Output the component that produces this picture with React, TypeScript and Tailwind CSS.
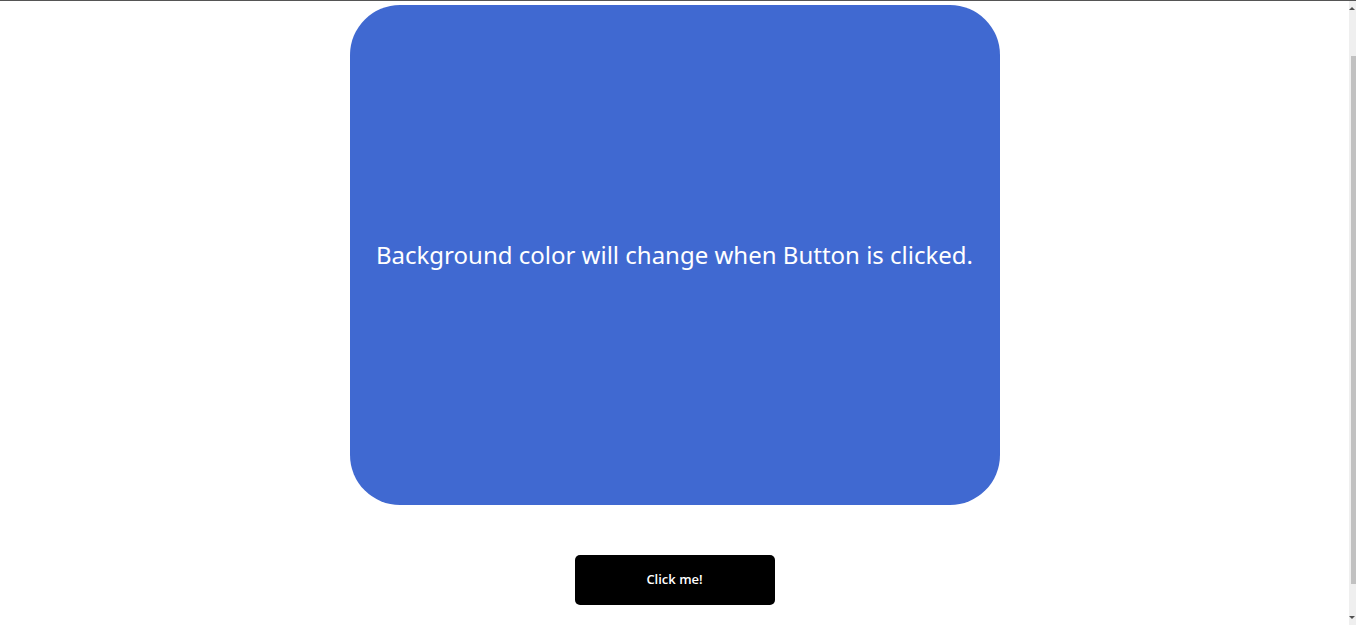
import React, { useState } from "react";

const colors = ["#4069d1", "#d14069", "#40a069", "#d1a040"];

export default function App() {
  const [i, setI] = useState(0);
  return (
    <div className="h-[625px] overflow-hidden flex bg-white">
      <main className="flex-1 border-t border-[#555555] flex flex-col items-center pt-[4px]">
        <div
          className="w-[650px] h-[500px] shrink-0 rounded-[50px] flex items-center justify-center text-white text-[24px] font-['Noto_Sans',sans-serif]"
          style={{ backgroundColor: colors[i] }}
        >
          Background color will change when Button is clicked.
        </div>
        <button
          onClick={() => setI((i + 1) % colors.length)}
          className="mt-[50px] w-[200px] h-[50px] shrink-0 bg-black text-white rounded-[5px] text-[13px] font-semibold font-['Open_Sans',sans-serif]"
        >
          Click me!
        </button>
      </main>
      <aside className="w-[7px] h-[625px] bg-[#efefef] flex flex-col items-end border-t border-[#555555]">
        <div className="h-[15px] w-full flex items-center justify-end pr-[1px]">
          <div className="w-0 h-0 border-l-[3px] border-r-[3px] border-b-[3px] border-l-transparent border-r-transparent border-b-[#505050]" />
        </div>
        <div className="mt-[40px] w-[5px] h-[528px] bg-[#c1c1c1]" />
        <div className="flex-1" />
        <div className="h-[15px] w-full flex items-center justify-end pr-[1px]">
          <div className="w-0 h-0 border-l-[3px] border-r-[3px] border-t-[3px] border-l-transparent border-r-transparent border-t-[#505050]" />
        </div>
      </aside>
    </div>
  );
}
